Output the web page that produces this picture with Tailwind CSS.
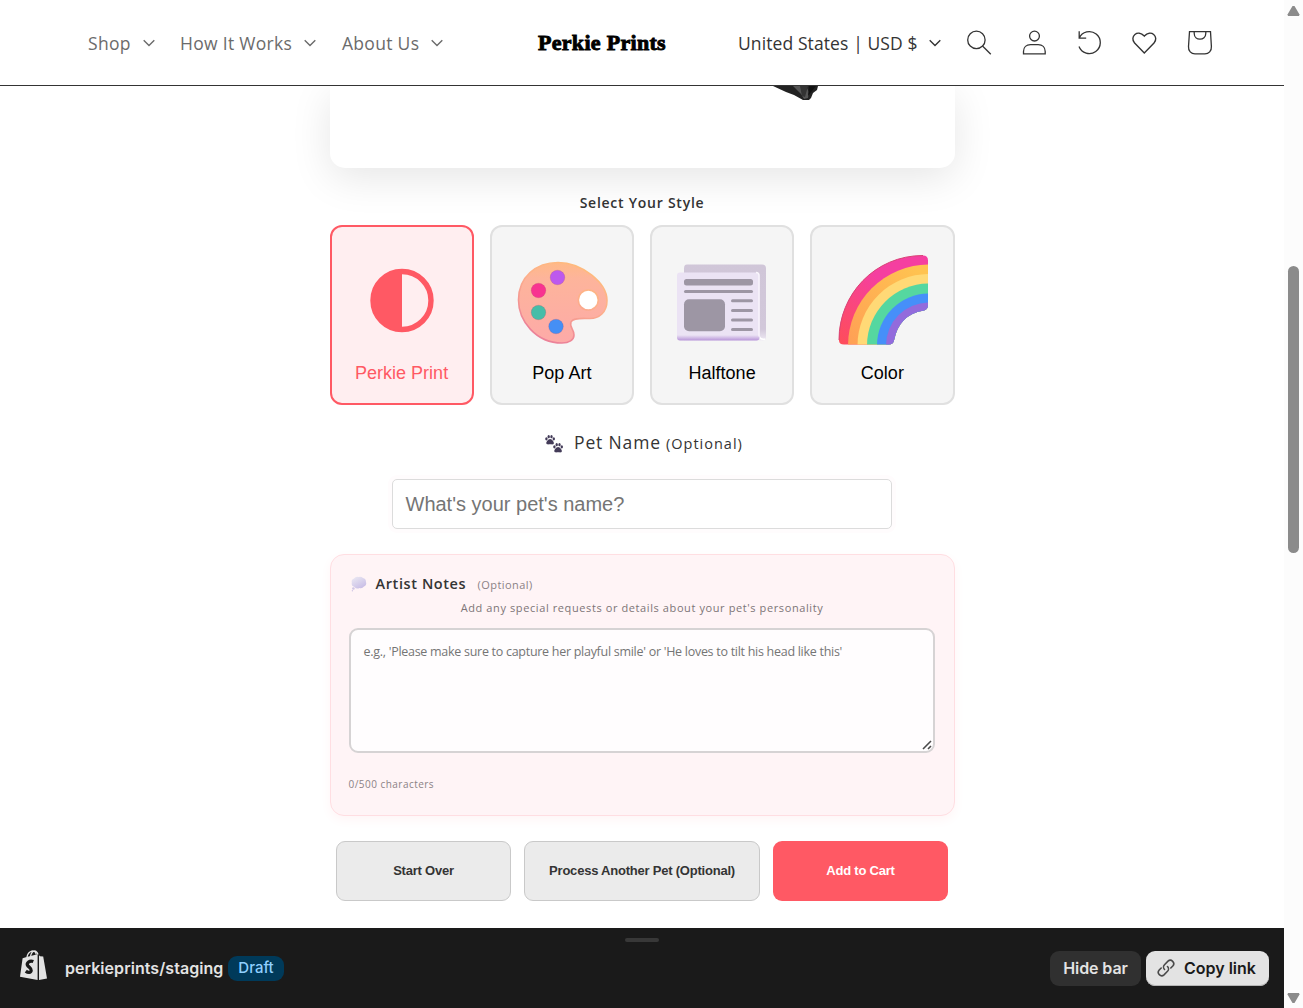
<!DOCTYPE html>
<html lang="en"><head><meta charset="utf-8"><title>Perkie Prints</title>
<script src="https://cdn.jsdelivr.net/npm/@tailwindcss/browser@4"></script></head>
<body class="bg-white">
<div class="h-[1008px] w-[1303px] flex overflow-hidden bg-white">
<div class="flex w-[1284px] flex-col font-['Open_Sans',sans-serif] text-[#343434]">
<header class="relative z-10 flex h-[86px] shrink-0 items-center border-b border-[#343434] bg-white pl-[88px] text-[17.500px] leading-6">
  <nav class="flex w-[449px] items-center tracking-[0.300px] text-[#6b6b6b]">
    <a class="flex w-[92px] items-center gap-3"><span class="w-[43px] whitespace-nowrap">Shop</span><svg class="mt-px h-2 w-3" viewBox="0 0 12 8" fill="none" stroke="currentColor" stroke-width="1.4"><path d="M.7 1.2 6 6.5l5.300-5.300"/></svg></a>
    <a class="flex w-[162px] items-center gap-3"><span class="w-[112px] whitespace-nowrap">How It Works</span><svg class="mt-px h-2 w-3" viewBox="0 0 12 8" fill="none" stroke="currentColor" stroke-width="1.4"><path d="M.7 1.2 6 6.5l5.300-5.300"/></svg></a>
    <a class="flex items-center gap-3"><span class="w-[77px] whitespace-nowrap">About Us</span><svg class="mt-px h-2 w-3" viewBox="0 0 12 8" fill="none" stroke="currentColor" stroke-width="1.4"><path d="M.7 1.2 6 6.5l5.300-5.300"/></svg></a>
  </nav>
  <div class="w-[201px] whitespace-nowrap pl-px font-['Liberation_Serif',serif] text-[22px] font-bold tracking-[0.3px] text-black [-webkit-text-stroke:0.900px_black]">Perkie Prints</div>
  <div class="flex w-[228px] items-center gap-3"><span class="w-[179px] whitespace-nowrap tracking-[0.100px]">United States | USD $</span><svg class="mt-px h-2 w-3" viewBox="0 0 12 8" fill="none" stroke="currentColor" stroke-width="1.4"><path d="M.7 1.2 6 6.5l5.300-5.300"/></svg></div>
  <div class="flex gap-[29px]">
    <svg class="size-[26px]" viewBox="0 0 26 26" fill="none" stroke="currentColor" stroke-width="1.3"><circle cx="10.400" cy="9.900" r="8.700"/><path d="m16.500 16 8.300 8.300"/></svg>
    <svg class="size-[26px]" viewBox="0 0 26 26" fill="none" stroke="currentColor" stroke-width="1.3"><circle cx="13.500" cy="6.100" r="4.900"/><path d="M2.500 23.900v-2.400c0-4.300 3-6.900 7-6.900h7.700c4 0 7 2.600 7 6.900v2.400z"/></svg>
    <svg class="size-[26px]" viewBox="0 0 26 26" fill="none" stroke="currentColor" stroke-width="1.300"><path d="M3.200 1.200v7h7M3.200 8.200a11 11 0 1 1-.2 8.300"/></svg>
    <svg class="size-[26px]" viewBox="0 0 26 26" fill="none" stroke="currentColor" stroke-width="1.400"><path d="M13.300 23 3.600 13.100c-5.400-6.600 3-14.200 9.700-7 6.700-7.200 15.100.4 9.700 7z"/></svg>
    <svg class="ml-px size-[26px]" viewBox="0 0 26 26" fill="none" stroke="currentColor" stroke-width="1.300"><path d="M2.500 1.700h21l.9 14.800c.3 4.600-2.700 7.400-6.500 7.400H8c-3.800 0-6.800-2.800-6.500-7.400zM7.200 1.700v1.500c0 8 11.600 8 11.600 0V1.700"/></svg>
  </div>
</header>
<main class="flex h-[842px] shrink-0 flex-col items-center">
  <div class="relative h-[82px] w-[625px] shrink-0 rounded-b-[15px] bg-white shadow-[0_10px_40px_rgba(0,0,0,0.1)]">
    <svg class="absolute left-[443px] top-0 h-4 w-[47px]" viewBox="0 0 47 16"><path d="M0 0h45l-1 4-4 3-2 5-2 2h-6l-9-5-8-3z" fill="#222"/><path d="m20 0 8 8 3 5 4-1 1-6-3-6z" fill="#555"/><path d="m27 0 2 10 3 1 3-11z" fill="#333"/><path d="m36 0-1 10 4-5 4-5z" fill="#111"/></svg>
  </div>
  <h2 class="mt-[25px] h-[20px] text-[14px] font-semibold leading-5 tracking-[0.750px]">Select Your Style</h2>
  <div class="mt-[12px] grid h-[180px] w-[625px] shrink-0 grid-cols-4 gap-4 font-['Liberation_Sans',sans-serif] text-[18px] leading-6 text-black">
    <div class="flex flex-col items-center rounded-xl border-2 border-[#ff5964] bg-[#ffeef0] pt-[27px] text-[#ff5964]">
      <svg class="h-[94px] w-[92px]" viewBox="0 0 92 94"><circle cx="46" cy="46.500" r="29" fill="none" stroke="currentColor" stroke-width="5.400"/><path d="M46 16a30.500 30.500 0 0 0 0 61z" fill="currentColor"/></svg>
      <span class="mt-[13px]">Perkie Print</span></div>
    <div class="flex flex-col items-center rounded-xl border-2 border-[#e0e0e0] bg-[#f5f5f5] pt-[27px]">
      <svg class="h-[94px] w-[92px]" viewBox="0 0 92 94"><defs><linearGradient id="pa" x1="0" y1="0" x2="0" y2="1"><stop stop-color="#ffb987"/><stop offset=".2" stop-color="#fdb49b"/><stop offset="1" stop-color="#fdaaa8"/></linearGradient><linearGradient id="pe" x1="1" y1="0" x2=".5" y2="1"><stop stop-color="#ffbf75"/><stop offset=".5" stop-color="#fdb08c"/><stop offset="1" stop-color="#ec8298"/></linearGradient></defs><circle cx="72.300" cy="46" r="10.500" fill="#fff"/><path fill="url(#pa)" fill-rule="evenodd" stroke="url(#pe)" stroke-width="1.600" d="M42 8.500C66 8.500 91 29 91 46.500c0 12-8 18-17 18-8 0-17-1-19 3.500-2 5 3 7 3 13 0 5-5 8-12 8C20 89 2.500 67 2.500 46 2.500 23 20 8.500 42 8.500zM72.300 36a10 10 0 1 0 0 20 10 10 0 0 0 0-20z"/><g stroke="#a1405e" stroke-opacity=".25" stroke-width=".8"><circle cx="41.500" cy="23.500" r="7.300" fill="#bd59ed"/><circle cx="22.500" cy="36.500" r="7.300" fill="#f83390"/><circle cx="22.500" cy="58.500" r="7.300" fill="#46bda8"/><circle cx="40" cy="72.500" r="7.300" fill="#458ff5"/></g></svg>
      <span class="mt-[13px]">Pop Art</span></div>
    <div class="flex flex-col items-center rounded-xl border-2 border-[#e0e0e0] bg-[#f5f5f5] pt-[27px]">
      <svg class="h-[94px] w-[92px]" viewBox="0 0 92 94"><defs><linearGradient id="nb" x1="0" y1="0" x2="0" y2="1"><stop stop-color="#d0c6d8"/><stop offset=".85" stop-color="#d2c8da"/><stop offset="1" stop-color="#efeaf4"/></linearGradient><linearGradient id="nf" x1="0" y1="0" x2="0" y2="1"><stop offset=".92" stop-color="#ebe3f4"/><stop offset="1" stop-color="#b795d8"/></linearGradient></defs><path d="M11 10.500h75q4 0 4 4v68q0 4-4 4H8v-72q0-4 3-4z" fill="url(#nb)"/><path d="M83 82q1 4 6 3" stroke="#fff" stroke-width="1.500" fill="none"/><rect x="1" y="18.500" width="82.500" height="68" rx="3" fill="url(#nf)" /><path d="M80 18.500q3 0 3 3v61" fill="none" stroke="#f9f6fc" stroke-width="1.400"/><g fill="#9d96a4"><rect x="8" y="25" width="69" height="6.500" rx="2.500"/><rect x="8" y="36" width="69" height="3" rx="1.500"/><rect x="8" y="45.300" width="41" height="32" rx="5"/><rect x="55" y="45.300" width="22" height="3" rx="1.500"/><rect x="55" y="55" width="22" height="3" rx="1.500"/><rect x="55" y="64.500" width="22" height="3" rx="1.500"/><rect x="55" y="74" width="22" height="3" rx="1.500"/></g></svg>
      <span class="mt-[13px]">Halftone</span></div>
    <div class="flex flex-col items-center rounded-xl border-2 border-[#e0e0e0] bg-[#f5f5f5] pt-[27px]">
      <svg class="h-[94px] w-[92px]" viewBox="-1 0 92 94"><defs><clipPath id="rc"><path d="M2 86C2 40 38 1.500 86 1.500q5 0 5 5v44q0 5-4 6-25 4-30 30-1 4-5 4H7q-5 0-5-4z"/></clipPath><linearGradient id="r1" x1="0" y1="1" x2="1" y2="0"><stop stop-color="#ff4e55"/><stop offset=".6" stop-color="#f53fa0"/></linearGradient><linearGradient id="r2" x1="0" y1="1" x2="1" y2="0"><stop stop-color="#ff8b58"/><stop offset=".7" stop-color="#ffc350"/></linearGradient></defs><g clip-path="url(#rc)"><rect width="92" height="94" fill="url(#r1)"/><circle cx="92" cy="91.500" r="81" fill="url(#r2)"/><circle cx="92" cy="91.500" r="71.500" fill="#ffd976"/><circle cx="92" cy="91.500" r="62" fill="#55d7a0"/><circle cx="92" cy="91.500" r="52" fill="#468ff9"/><circle cx="92" cy="91.500" r="43" fill="#936bdc"/></g><path d="M2 86C2 40 38 1.500 86 1.500" fill="none" stroke="#d94476" stroke-width="1"/></svg>
      <span class="mt-[13px]">Color</span></div>
  </div>
  <label class="mt-[25px] flex h-6 w-[196px] shrink-0 items-center text-[17.500px] leading-6">
    <svg class="mt-1 mr-[11px] ml-[1px] h-[18px] w-[18px] shrink-0" viewBox="0 0 18 18" fill="#433b58"><g id="paw"><ellipse cx="1.400" cy="3.800" rx="1.200" ry="1.600"/><ellipse cx="3.700" cy="1.700" rx="1.200" ry="1.600"/><ellipse cx="6.500" cy="1.700" rx="1.200" ry="1.600"/><ellipse cx="8.800" cy="3.800" rx="1.200" ry="1.600"/><path d="M5.100 4c1.800 0 4.300 3 3.700 4.600-.6 1.400-2.300.7-3.700.7s-3.100.7-3.700-.7C.8 7 3.300 4 5.100 4z"/></g><use href="#paw" x="8" y="8"/></svg>
    <span class="w-[92px] shrink-0 whitespace-nowrap tracking-[0.850px]">Pet Name</span><span class="mt-[3px] whitespace-nowrap text-[14.500px] tracking-[1px]">(Optional)</span></label>
  <div class="mt-[25px] flex h-[50px] w-[500px] shrink-0 items-center rounded-[5px] border border-[#dcdcdc] bg-white pl-[12.500px] font-['Liberation_Sans',sans-serif] text-[20px] text-[#757575] shadow-[0_0_0_4px_#fffcfd]">What's your pet's name?</div>
  <section class="mt-[25px] flex h-[262px] w-[625px] shrink-0 flex-col rounded-[14px] border border-[#ffdee2] bg-[#fff4f6] px-[18px] pt-[19px] shadow-[0_4px_12px_#fff5f6]">
    <div class="flex h-5 items-center leading-5">
      <svg class="ml-[2px] mr-[9px] size-4" viewBox="0 0 16 16"><defs><linearGradient id="cl" x1="0" y1="0" x2=".7" y2="1"><stop stop-color="#edebf3"/><stop offset="1" stop-color="#c8bde6"/></linearGradient></defs><path fill="url(#cl)" d="M3 2.500Q5 0 7.500 1 10 0 12 2q3 .5 3 4 1 3-2 4.500-2 2.500-4.500 1.500-3 1.500-5-1Q0 10 .800 6.500 0 3.500 3 2.500z"/><circle cx="2.400" cy="12.500" r="1.300" fill="#d0c6e5"/><circle cx="1.400" cy="14.700" r=".7" fill="#d0c6e5"/></svg>
      <span class="w-[102px] whitespace-nowrap text-[14.500px] font-semibold tracking-[0.600px]">Artist Notes</span><span class="mt-px whitespace-nowrap text-[11px] tracking-[0.450px] text-[#8b8285]">(Optional)</span></div>
    <p class="mt-[6px] h-4 text-center text-[11px] leading-4 tracking-[0.600px] text-[#7d7477]">Add any special requests or details about your pet's personality</p>
    <div class="relative mt-[12px] h-[125px] w-[586px] rounded-[9px] border-2 border-[#d6d3d4] bg-[#fffdfe] px-[13px] pt-[14px] text-[12.500px] leading-4 tracking-[-0.280px] text-[#757575]"><span class="whitespace-nowrap">e.g., 'Please make sure to capture her playful smile' or 'He loves to tilt his head like this'</span>
      <svg class="absolute bottom-px right-[1px] size-[10px]" viewBox="0 0 10 10" stroke="#4a4a4a" stroke-width="1.600"><path d="m1 9 8-8M6 9l3-3"/></svg></div>
    <p class="mt-[24px] text-[10px] leading-[14px] tracking-[0.470px] text-[#8b8285]">0/500 characters</p>
  </section>
  <div class="mt-[25px] flex h-[60px] w-[612px] shrink-0 gap-[13px] font-['Liberation_Sans',sans-serif] text-[13px] font-bold tracking-[-0.220px]">
    <button class="w-[175px] rounded-[9px] border border-[#c9c9c9] bg-[#ebebeb]">Start Over</button>
    <button class="w-[236px] rounded-[9px] border border-[#c9c9c9] bg-[#ebebeb]">Process Another Pet (Optional)</button>
    <button class="w-[175px] rounded-[9px] bg-[#ff5964] text-white">Add to Cart</button>
  </div>
</main>
<footer class="relative flex h-[80px] shrink-0 items-center bg-[#1a1a1a] pl-5 pr-[15px] font-['Inter',sans-serif] text-[16px] font-semibold text-[#e3e3e3]">
  <div class="absolute left-[625px] top-[10px] h-1 w-[34px] rounded-full bg-[#383838]"></div>
  <svg class="mb-[7px] h-[30px] w-[27px]" viewBox="0 0 27 30"><path fill="#e3e3e3" d="m2.600 8.200 4-1.200 11-2.700V30L0 26.700zM19 5.200l1 1 3.200.3L27 28.500 19 30z"/><path d="M7 7.200C8 .8 15.500-1.700 16.200 4.500M10.500 6.500C11.500 1 16-1.500 18 4.500" fill="none" stroke="#e3e3e3" stroke-width="1.300"/><path d="M13.300 11.600C9.500 10 6.500 13 7.500 15.300c1 2 4.100 2.800 3.700 5.200-.4 2.500-3.200 2.400-5.400.6" fill="none" stroke="#1a1a1a" stroke-width="3.300"/></svg>
  <span class="ml-[18px] w-[163px] whitespace-nowrap tracking-[0.050px]">perkieprints/staging</span>
  <span class="flex h-[25px] w-[56px] items-center justify-center rounded-[9px] bg-[#003a5a] text-[15px] font-medium text-[#8fd0ff]">Draft</span>
  <div class="ml-auto flex gap-[5px]"><button class="h-[35px] w-[91px] rounded-[9px] bg-[#303030] tracking-[-0.100px]">Hide bar</button>
  <button class="flex h-[35px] w-[123px] items-center rounded-[9px] bg-[#e3e3e3] pl-[10px] text-[#1a1a1a] shadow-[inset_0_-1px_0_#b5b5b5]"><svg class="mr-[8px] size-5 shrink-0" viewBox="0 0 20 20" fill="none" stroke="#4a4a4a" stroke-width="1.600" stroke-linecap="round"><path d="M8.500 11.500a3.400 3.400 0 0 1 0-4.800l3.500-3.500a3.400 3.400 0 0 1 4.800 4.800l-2 2M11.500 8.500a3.400 3.400 0 0 1 0 4.800L8 16.800A3.400 3.400 0 0 1 3.200 12l2-2"/></svg><span class="whitespace-nowrap">Copy link</span></button></div>
</footer>
</div>
<div class="flex w-[19px] flex-col items-center bg-[#fcfcfc]"><svg class="mt-[5px] h-[11px] w-[13px]" viewBox="0 0 13 11"><path d="M5.500 1h2L12.500 9.500 12 11H1L.5 9.500z" fill="#8b8b8b"/></svg><div class="mt-[250px] h-[287px] w-[11px] rounded-full bg-[#8b8b8b]"></div><svg class="mb-[4px] mt-auto h-[11px] w-[13px]" viewBox="0 0 13 11"><path d="M1 0h11l.5 1.500L7.500 10h-2L.5 1.500z" fill="#8b8b8b"/></svg></div>
</div>
</body></html>
